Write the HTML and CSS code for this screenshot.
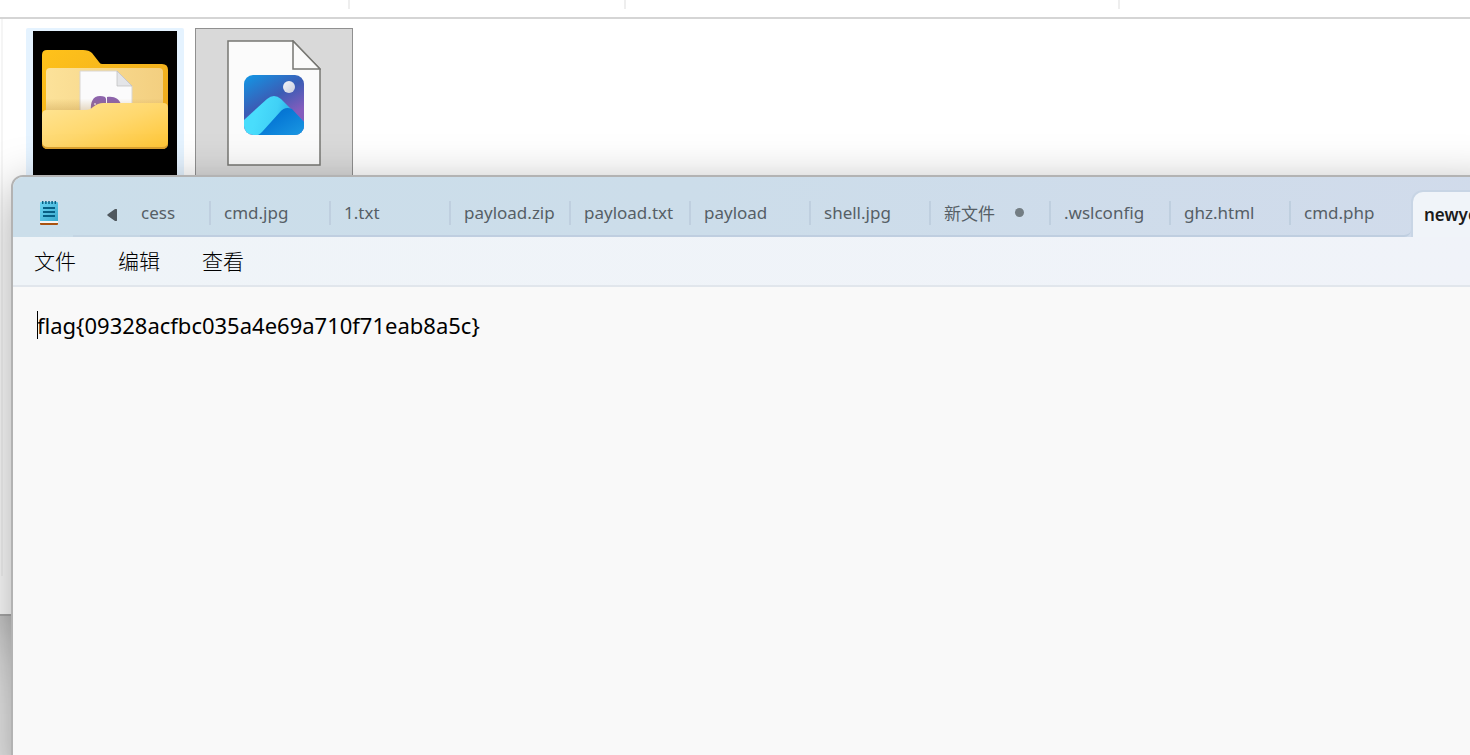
FILE: index.html
```html
<!DOCTYPE html>
<html lang="zh-CN">
<head>
<meta charset="utf-8">
<title>Notepad</title>
<link rel="stylesheet" href="styles.css">
</head>
<body>
<main class="desktop">
  <section class="explorer">
    <div class="columns"><span class="col-first"></span><span class="col-second"></span><span class="col-third"></span><span></span></div>
    <div class="files">
      <div class="file file-hover">
        <div class="thumb">
          <svg viewBox="0 0 144 144" width="144" height="144" aria-hidden="true">
            <defs>
              <linearGradient id="fback" x1="0" y1="0" x2="1" y2="1"><stop offset="0" stop-color="#ffc21a"/><stop offset="1" stop-color="#e8a520"/></linearGradient>
              <linearGradient id="finner" x1="0" y1="0" x2="1" y2="0"><stop offset="0" stop-color="#fce29a"/><stop offset="1" stop-color="#f3cf80"/></linearGradient>
              <linearGradient id="ffront" x1="0" y1="0" x2="1" y2="1"><stop offset="0" stop-color="#ffe596"/><stop offset=".5" stop-color="#ffd86e"/><stop offset="1" stop-color="#ffc636"/></linearGradient>
              <linearGradient id="fshade" x1="0" y1="0" x2="0" y2="1"><stop offset=".5" stop-color="#a87520" stop-opacity="0"/><stop offset="1" stop-color="#a87520" stop-opacity=".3"/></linearGradient>
            </defs>
            <path fill="url(#fback)" d="M14 19h36q6 0 9 3l7 9q1 2 3 2h60q6 0 6 6v73q0 6-6 6H15q-6 0-6-6V24q0-5 5-5Z"/>
            <path fill="url(#finner)" d="M17 37h109q4 0 4 4v45H13V41q0-4 4-4Z"/>
            <path fill="#fbfbfc" stroke="#d9d6d2" d="M47 40h37l15 15v41H47Z"/>
            <path fill="#e4e5e8" stroke="#bdbdbd" stroke-width=".7" d="M84 40v15h15Z"/>
            <path fill="#8d64ab" d="M58 80c-1-9 2-15 9-15 4 0 6 1 6 3v12Zm16-14c8-1 12 2 14 7v6H74Z"/>
            <circle cx="62" cy="73" r="1" fill="#e4d9ed"/>
            <path fill="url(#fshade)" d="M13 54h117v27H13Z"/>
            <path fill="#dca12f" d="M14 81h38c4 0 6-1 9-4q5-4 10-4h59q5 0 5 5v34q0 6-6 6H15q-6 0-6-6V86q0-5 5-5Z"/>
            <path fill="url(#ffront)" d="M14 79h38c4 0 6-1 8-3q5-4 10-4h60q5 0 5 5v33q0 6-6 6H15q-6 0-6-6V84q0-5 5-5Z"/>
          </svg>
        </div>
      </div>
      <div class="file file-selected">
        <svg viewBox="0 0 94 126" width="94" height="126" aria-hidden="true">
          <defs>
            <linearGradient id="sky" x1=".1" y1="0" x2=".7" y2="1"><stop offset="0" stop-color="#1593e2"/><stop offset=".45" stop-color="#3b5cb5"/><stop offset=".8" stop-color="#855dbd"/></linearGradient>
            <linearGradient id="ridge" gradientUnits="userSpaceOnUse" x1="30" y1="70" x2="77" y2="82"><stop offset="0" stop-color="#49ddfc"/><stop offset=".4" stop-color="#40d0f6"/><stop offset=".75" stop-color="#22a8e6"/><stop offset="1" stop-color="#3c96dc"/></linearGradient>
            <linearGradient id="slope" x1="0" y1="0" x2="1" y2="1"><stop offset="0" stop-color="#0068c6"/><stop offset=".4" stop-color="#0779d6"/><stop offset="1" stop-color="#1b98e2"/></linearGradient>
            <linearGradient id="moon" x1="0" y1="0" x2="1" y2="1"><stop offset="0" stop-color="#f4f5f8"/><stop offset="1" stop-color="#c9cede"/></linearGradient>
            <clipPath id="tile"><rect x="17" y="35" width="60" height="60" rx="9"/></clipPath>
          </defs>
          <path fill="#fbfbfb" stroke="#777773" stroke-width="1.5" d="M1 1h65l27 28v96H1Z"/>
          <path fill="#fbfbfb" stroke="#777773" stroke-width="1.5" d="M66 1v28h27Z"/>
          <g clip-path="url(#tile)">
            <path fill="url(#sky)" d="M17 35h60v60H17Z"/>
            <path fill="url(#ridge)" d="M17 80 40 59q7-6 14 0l23 23v13H26q-9 0-9-8Z"/>
            <path fill="url(#slope)" d="M31 95q2-1 4-3l18-20q5-6 12-3l12 13v13Z"/>
          </g>
          <circle cx="62" cy="47" r="6" fill="url(#moon)"/>
        </svg>
      </div>
    </div>
  </section>

  <section class="notepad">
    <header class="titlebar">
      <svg class="app-icon" viewBox="0 0 18 24" width="18" height="24" aria-hidden="true">
        <defs><linearGradient id="pad" x1="0" y1="0" x2="1" y2="1"><stop offset="0" stop-color="#6cd5f4"/><stop offset="1" stop-color="#3ba9cc"/></linearGradient></defs>
        <path fill="#a9520f" d="M0 20h18v3q0 1-1 1H1q-1 0-1-1Z"/>
        <path fill="#f3f4f4" d="M0 20h18v2H0Z"/>
        <path fill="url(#pad)" d="M1 1h16q1 0 1 1v18H0V2q0-1 1-1Z"/>
        <path stroke="#075f84" stroke-width="2" d="M3 7h12M3 11h12M3 15h12"/>
        <path stroke="#075f84" stroke-width="1.500" d="M2.700 0v3M5.900 0v3M9 0v3M12.100 0v3M15.300 0v3"/>
      </svg>
      <div class="scroller">
        <button class="scroll-left" aria-label="向左滚动"><svg viewBox="0 0 10 12" width="10" height="12" aria-hidden="true"><path fill="#50585e" d="M8 0q2-1 2 1v10q0 2-2 1L1 7Q-.5 6 1 5Z"/></svg></button>
      </div>
      <nav class="tabs">
        <button class="tab tab-cut">cess</button>
        <button class="tab">cmd.jpg</button>
        <button class="tab">1.txt</button>
        <button class="tab">payload.zip</button>
        <button class="tab">payload.txt</button>
        <button class="tab">payload</button>
        <button class="tab">shell.jpg</button>
        <button class="tab">新文件<i class="unsaved"></i></button>
        <button class="tab">.wslconfig</button>
        <button class="tab">ghz.html</button>
        <button class="tab tab-last">cmd.php</button>
        <button class="tab tab-active">newye</button>
      </nav>
    </header>
    <div class="menubar">
      <button>文件</button>
      <button>编辑</button>
      <button>查看</button>
    </div>
    <div class="editor">
      <textarea aria-label="文本编辑器" spellcheck="false">flag{09328acfbc035a4e69a710f71eab8a5c}</textarea>
      <i class="caret"></i>
    </div>
  </section>
</main>
</body>
</html>
```
FILE: styles.css
```css
* { box-sizing: border-box; }
body {
  margin: 0;
  font-family: "Noto Sans", "Noto Sans CJK SC", sans-serif;
}
button {
  margin: 0;
  padding: 0;
  border: 0;
  background: none;
  font: inherit;
  color: inherit;
  text-align: left;
}
.desktop {
  position: relative;
  height: 100vh;
  overflow: hidden;
  background: #e8e8e8;
}
.explorer {
  height: 616px;
  border-bottom: 2px solid #aaa;
  background: #fff;
  box-shadow: 0 4px 90px rgba(0, 0, 0, .5);
}
.columns {
  display: flex;
  height: 19px;
  padding-bottom: 8px;
  border-bottom: 2px solid #d5d5d5;
}
.columns span { border-right: 2px solid #eee; }
.columns span:last-child { border: 0; }
.col-first { width: 350px; }
.col-second { width: 276px; }
.col-third { width: 494px; }
.files {
  display: flex;
  gap: 11px;
  height: 557px;
  margin-left: 1px;
  padding: 9px 0 0 23px;
  border-left: 2px solid #f5f5f5;
}
.file {
  display: flex;
  justify-content: center;
  width: 158px;
  height: 190px;
}
.file-hover {
  padding-top: 3px;
  border-radius: 2px;
  background: #e5f3ff;
}
.file-selected {
  padding-top: 11px;
  border: 1px solid #909090;
  background: #d9d9d9;
}
.thumb {
  width: 144px;
  height: 144px;
  background: #000;
}
.notepad {
  position: absolute;
  top: 175px;
  right: -40px;
  bottom: -20px;
  left: 11px;
  display: flex;
  flex-direction: column;
  overflow: hidden;
  border: 2px solid #b3b3b3;
  border-radius: 12px;
  background: #f9f9f9;
  box-shadow: 0 12px 48px rgba(0, 0, 0, .34);
}
.titlebar {
  display: flex;
  height: 60px;
  padding-left: 27px;
  background: linear-gradient(90deg, #cbdeea, #ccddea 45%, #d1dbeb);
}
.app-icon { margin-top: 24px; }
.scroller {
  width: 67px;
  margin-left: 15px;
  padding: 32px 0 0 34px;
  border-bottom: 2px solid #c4d5e3;
}
.scroll-left {
  display: block;
  width: 10px;
  height: 12px;
}
.scroll-left svg { display: block; }
.tabs {
  display: flex;
  flex: 1;
  padding-top: 13px;
  overflow: hidden;
  color: #565f66;
  font-size: 17px;
}
.tab {
  display: flex;
  flex: none;
  align-items: center;
  width: 120px;
  padding-left: 13px;
  border-bottom: 2px solid #bfcee0;
  background: linear-gradient(#bfcfdf, #bfcfdf) right 11px / 2px 24px no-repeat;
}
.tab-cut {
  width: 71px;
  padding-left: 1px;
}
.tab-last {
  border-bottom-right-radius: 7px;
  background: none;
}
.tab-active {
  width: 180px;
  border: 2px solid #c8d5e5;
  border-bottom: 0;
  border-radius: 12px 12px 0 0;
  padding-left: 11px;
  background: #f0f4f9;
  color: #1b1b1b;
  font-weight: 600;
}
.unsaved {
  width: 9px;
  height: 9px;
  margin-left: 20px;
  border-radius: 50%;
  background: #737d83;
}
.menubar {
  display: flex;
  gap: 42px;
  height: 50px;
  padding: 0 0 2px 21px;
  border-bottom: 2px solid #e1e6ec;
  background: linear-gradient(90deg, #eff4f8, #f0f3f9);
  color: #000;
  font-family: "Noto Sans CJK SC", sans-serif;
  font-size: 21px;
  font-weight: 300;
}
.editor {
  position: relative;
  flex: 1;
  padding: 22px 24px;
}
.editor textarea {
  display: block;
  width: 100%;
  height: 100%;
  padding: 0;
  border: 0;
  outline: 0;
  resize: none;
  background: transparent;
  color: #000;
  font: 22px/32px "Noto Sans", sans-serif;
}
.caret {
  position: absolute;
  top: 24px;
  left: 24px;
  width: 1px;
  height: 28px;
  background: #000;
}
```
